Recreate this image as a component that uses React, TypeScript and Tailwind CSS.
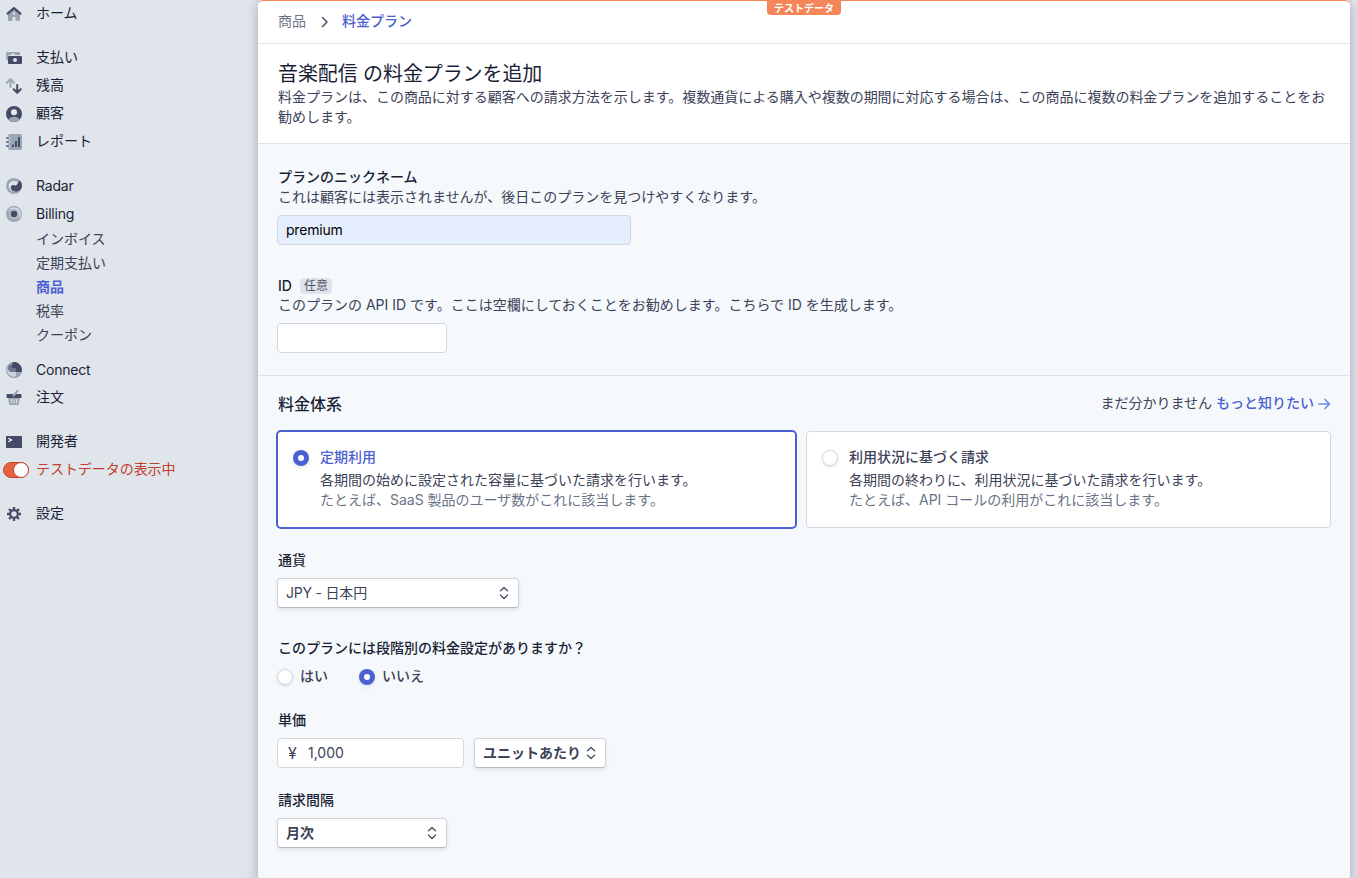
import React from 'react';

interface NavItemProps {
  label: string;
  icon: React.ReactNode;
  latin?: boolean;
}

const NavItem: React.FC<NavItemProps> = ({ label, icon, latin }) => (
  <a className="flex h-7 items-center pl-[6px] text-[#1a1f36]">
    <span className="mr-[14px] h-4 w-4 shrink-0">{icon}</span>
    <span className={latin ? 'tracking-[-0.2px]' : 'pb-[2px]'}>{label}</span>
  </a>
);

const Svg: React.FC<{ children: React.ReactNode }> = ({ children }) => (
  <svg width="16" height="16" viewBox="0 0 16 16" className="block">
    {children}
  </svg>
);

const DARK = '#454b66';
const LIGHT = '#9ba6b5';

const HomeIcon = () => (
  <Svg>
    <path d="M8 3l6 5v6a1 1 0 0 1-1 1H9.500v-4h-3v4H3a1 1 0 0 1-1-1V8z" fill={LIGHT} />
    <path d="M1.600 7.700L8 2.200l6.400 5.500" fill="none" stroke={DARK} strokeWidth="2.200" strokeLinecap="round" strokeLinejoin="round" />
    <circle cx="8" cy="7.500" r="1.200" fill="#e0e4eb" />
  </Svg>
);

const PaymentsIcon = () => (
  <Svg>
    <path d="M1 2h12a1 1 0 0 1 1 1v2H3.500A1.500 1.500 0 0 0 2 6.500V10H1a1 1 0 0 1-1-1V3a1 1 0 0 1 1-1z" fill={LIGHT} />
    <path d="M5 5.200a2 2 0 0 1 4 0z" fill="#e0e4eb" />
    <path fillRule="evenodd" d="M3 6h12a1 1 0 0 1 1 1v6a1 1 0 0 1-1 1H3a1 1 0 0 1-1-1V7a1 1 0 0 1 1-1zm6 2a2 2 0 1 0 0 4 2 2 0 0 0 0-4z" fill={DARK} />
  </Svg>
);

const BalanceIcon = () => (
  <Svg>
    <path d="M4.500 9V1.500M1 4.700L4.500 1.200 8 4.700" fill="none" stroke={LIGHT} strokeWidth="2" strokeLinecap="round" strokeLinejoin="round" />
    <path d="M11.200 7v7.500M7.700 11.300l3.500 3.500 3.500-3.500" fill="none" stroke={DARK} strokeWidth="2" strokeLinecap="round" strokeLinejoin="round" />
  </Svg>
);

const CustomersIcon = () => (
  <Svg>
    <circle cx="8" cy="8" r="8" fill={DARK} />
    <path d="M2.200 13.500C3.500 11.600 5.600 10.700 8 10.700s4.500.9 5.800 2.800A8 8 0 0 1 8 16a8 8 0 0 1-5.800-2.500z" fill={LIGHT} />
    <circle cx="8" cy="6.200" r="3" fill="#e9edf2" />
  </Svg>
);

const ReportsIcon = () => (
  <Svg>
    <rect x="2" width="14" height="16" rx="1.800" fill={LIGHT} />
    <path d="M1 4h1.500M1 8h1.500M1 12h1.500" stroke="#e0e4eb" strokeWidth="3" strokeLinecap="round" />
    <path d="M.8 4h1.600M.8 8h1.600M.8 12h1.600" stroke={DARK} strokeWidth="1.600" strokeLinecap="round" />
    <path d="M7 10.500V13M10 7v6M13 3v10" stroke={DARK} strokeWidth="2" />
  </Svg>
);

const RadarIcon = () => (
  <Svg>
    <circle cx="8" cy="8" r="8" fill={LIGHT} />
    <circle cx="8" cy="8" r="5.300" fill="#e0e4eb" />
    <path d="M13.600 2.300A8 8 0 0 1 16 8c-.2 3.200-3 5.500-6.300 5.500-3 0-5-1.900-4.900-4.200C4.900 7.800 6 7 7.200 7c1.300 0 2 .8 3 .3 1.300-.7 2-3.200 3.400-5z" fill={DARK} />
  </Svg>
);

const BillingIcon = () => (
  <Svg>
    <circle cx="8" cy="8" r="8" fill={LIGHT} />
    <path d="M1.600 6A6.800 6.800 0 0 1 14.800 8c0 2.700-1.500 4.500-3.200 5.300 1.400-1.400 2-3 1.900-5A6.200 6.200 0 0 0 7.500 2.700C4.800 2.700 2.800 4 1.600 6z" fill="#e0e4eb" />
    <circle cx="8" cy="8" r="5.200" fill="#b3bdc9" />
    <circle cx="8" cy="8" r="3.200" fill={DARK} />
  </Svg>
);

const ConnectIcon = () => (
  <Svg>
    <circle cx="8" cy="8" r="7.400" fill="#cbd3dc" stroke={LIGHT} strokeWidth="1.200" />
    <path d="M10 10h5.700A8 8 0 0 1 8 16l2-2.500z" fill={LIGHT} />
    <path d="M6 0.300A8 8 0 0 1 15.700 10H10V6H6z" fill={DARK} />
    <path d="M6 .3V6h4v4H6a4 4 0 0 1 0-8z" fill="#6b748a" />
    <path d="M6 0h.5v2.300A4 4 0 0 0 2.300 6 6 6 0 0 1 6 0z" fill={LIGHT} />
  </Svg>
);

const OrdersIcon = () => (
  <Svg>
    <path d="M2 7h12l-1.200 7.200a1 1 0 0 1-1 .8H4.200a1 1 0 0 1-1-.8z" fill={LIGHT} />
    <path d="M5.200 9.300l.4 3.700M8 9.300V13M10.800 9.300l-.4 3.700" stroke="#e0e4eb" strokeWidth="1" strokeLinecap="round" />
    <rect x="0.500" y="4" width="15" height="4" rx="1" fill={DARK} />
    <path d="M7.500 5.500l4-4.500" stroke={LIGHT} strokeWidth="2" strokeLinecap="round" />
  </Svg>
);

const DevelopersIcon = () => (
  <Svg>
    <rect y="2" width="16" height="12" rx="1" fill={DARK} />
    <path d="M2.300 4.300L5.500 6 2.300 7.700" fill="none" stroke="#fff" strokeWidth="1.200" />
  </Svg>
);

const SettingsIcon = () => (
  <Svg>
    <circle cx="8" cy="8" r="3.800" fill="none" stroke={DARK} strokeWidth="2.200" />
    <path
      d="M8 1v2.500M8 12.500V15M1 8h2.500M12.500 8H15M3.050 3.050l1.800 1.800M11.150 11.150l1.800 1.800M3.050 12.950l1.800-1.800M11.150 4.850l1.800-1.800"
      stroke={DARK}
      strokeWidth="2.300"
    />
  </Svg>
);

const UpDown = () => (
  <svg width="10" height="14" viewBox="0 0 10 14" className="block shrink-0">
    <path d="M1.500 4.800L5 1.500 8.500 4.800M1.500 9.200L5 12.500 8.500 9.200" fill="none" stroke="#4f566b" strokeWidth="1.500" strokeLinecap="round" strokeLinejoin="round" />
  </svg>
);

const Radio: React.FC<{ checked?: boolean }> = ({ checked }) =>
  checked ? (
    <span className="flex h-4 w-4 shrink-0 items-center justify-center rounded-full bg-[#4b61d1] shadow-[0_2px_4px_rgba(60,66,87,0.12)]">
      <span className="h-[6px] w-[6px] rounded-full bg-white" />
    </span>
  ) : (
    <span className="block h-4 w-4 shrink-0 rounded-full border border-[#d5d9dd] bg-white shadow-[0_1px_3px_rgba(60,66,87,0.15)]" />
  );

const SELECT =
  'flex h-[30px] items-center justify-between rounded-[4px] border border-[#cfd3da] border-b-[#b3b8c1] bg-white px-2 pr-[9px] text-[#3c4257] shadow-[0_2px_4px_rgba(60,66,87,0.12)]';

const subItems = ['インボイス', '定期支払い', '商品', '税率', 'クーポン'];

const Sidebar = () => (
  <nav className="w-[258px] shrink-0">
    <NavItem label="ホーム" icon={<HomeIcon />} />
    <div className="mt-4">
      <NavItem label="支払い" icon={<PaymentsIcon />} />
      <NavItem label="残高" icon={<BalanceIcon />} />
      <NavItem label="顧客" icon={<CustomersIcon />} />
      <NavItem label="レポート" icon={<ReportsIcon />} />
    </div>
    <div className="mt-4">
      <NavItem label="Radar" icon={<RadarIcon />} latin />
      <NavItem label="Billing" icon={<BillingIcon />} latin />
      <div className="-mt-px mb-[9px]">
        {subItems.map((label) => (
          <a
            key={label}
            className={
              label === '商品'
                ? 'flex h-6 items-center pl-9 font-bold text-[#4b61d1]'
                : 'flex h-6 items-center pl-9 text-[#3c4257]'
            }
          >
            {label}
          </a>
        ))}
      </div>
      <NavItem label="Connect" icon={<ConnectIcon />} latin />
      <NavItem label="注文" icon={<OrdersIcon />} />
    </div>
    <div className="mt-4">
      <NavItem label="開発者" icon={<DevelopersIcon />} />
      <div className="flex h-7 items-center pl-[3px] text-[#c0402a]">
        <span className="mr-[7px] flex h-4 w-[26px] justify-end rounded-full border border-[#c84727] bg-[#e56342]">
          <span className="-my-px -mr-px h-4 w-4 rounded-full border border-[#c84727] bg-white" />
        </span>
        <span className="pb-[2px] tracking-[-0.05px]">テストデータの表示中</span>
      </div>
    </div>
    <div className="mt-4">
      <NavItem label="設定" icon={<SettingsIcon />} />
    </div>
  </nav>
);

export default function App() {
  return (
    <div className="flex h-[878px] w-[1357px] overflow-hidden bg-[#e0e4eb] font-['Inter','Noto_Sans_CJK_JP',sans-serif] text-sm leading-5 text-[#3c4257]">
      <Sidebar />
      <main className="relative w-[1092px] rounded-t-[5px] bg-[#f5f9fc] shadow-[0_7px_14px_rgba(60,66,87,0.2),0_0_8px_rgba(60,66,87,0.2)]">
        <div className="absolute inset-x-0 top-0 flex h-4 justify-center overflow-hidden rounded-t-[5px] border-t border-[#f5865a]">
          <span className="flex h-[14px] w-[74px] items-center justify-center rounded-b-[4px] bg-[#f5865a] text-[10px] font-bold text-white">
            テストデータ
          </span>
        </div>

        <header className="flex h-11 items-center rounded-t-[5px] border-b border-[#dfe3e9] bg-white pl-5 text-[#697386]">
          <span className="pb-px">商品</span>
          <svg width="8" height="12" viewBox="0 0 8 12" className="mr-[13px] ml-[15px]">
            <path d="M1.500 1.500L6 6l-4.500 4.500" fill="none" stroke="#4f566b" strokeWidth="1.600" strokeLinecap="round" strokeLinejoin="round" />
          </svg>
          <a className="pb-px font-medium text-[#4b61d1]">料金プラン</a>
        </header>

        <section className="h-[100px] border-b border-[#dfe3e9] bg-white px-5 pt-4">
          <h1 className="text-xl leading-7 tracking-[-0.1px] text-[#1a1f36]">音楽配信 の料金プランを追加</h1>
          <p className="-mt-px tracking-[-0.013px]">
            料金プランは、この商品に対する顧客への請求方法を示します。複数通貨による購入や複数の期間に対応する場合は、この商品に複数の料金プランを追加することをお勧めします。
          </p>
        </section>

        <section className="h-[232px] border-b border-[#dfe3e9] px-5 pt-[23px]">
          <label className="block font-medium text-[#1a1f36]">プランのニックネーム</label>
          <p>これは顧客には表示されませんが、後日このプランを見つけやすくなります。</p>
          <div className="-ml-px mt-2 flex h-[30px] w-[354px] items-center rounded-[4px] border border-[#d3d8df] bg-[#e5eefd] px-2 tracking-[-0.2px] text-black">
            premium
          </div>
          <label className="mt-[31px] flex items-center font-medium text-[#1a1f36]">
            ID
            <span className="ml-2 flex h-4 items-center rounded-[4px] bg-[#e0e4ea] px-1 text-xs font-normal text-[#4f566b]">任意</span>
          </label>
          <p className="-mt-px">このプランの API ID です。ここは空欄にしておくことをお勧めします。こちらで ID を生成します。</p>
          <div className="-ml-px mt-2 h-[30px] w-[170px] rounded-[4px] border border-[#d3d8df] bg-white" />
        </section>

        <section className="px-5 pt-[18px]">
          <div className="flex h-5 items-center justify-between">
            <h2 className="text-base leading-5 font-medium text-[#1a1f36]">料金体系</h2>
            <div className="-mr-px flex items-center gap-1">
              <span className="pb-[2px]">まだ分かりません</span>
              <a className="flex items-center gap-1 font-medium text-[#4b61d1]">
                <span className="pb-[2px]">もっと知りたい</span>
                <svg width="13" height="12" viewBox="0 0 13 12">
                  <path d="M1 6h10.500M7 1.500L11.500 6 7 10.500" fill="none" stroke="#6c8eef" strokeWidth="1.700" strokeLinecap="round" strokeLinejoin="round" />
                </svg>
              </a>
            </div>
          </div>

          <div className="mt-4 -mr-px -ml-[2px] flex h-[99px] items-center gap-[9px]">
            <div className="flex h-[99px] w-[521px] shrink-0 gap-[11px] rounded-[5px] border-2 border-[#4b61d1] bg-white pt-[15px] pl-[15px]">
              <div className="pt-[3px]">
                <Radio checked />
              </div>
              <div>
                <div className="mb-[3px] font-medium text-[#4b61d1]">定期利用</div>
                <div>各期間の始めに設定された容量に基づいた請求を行います。</div>
                <div className="text-[#697386]">たとえば、SaaS 製品のユーザ数がこれに該当します。</div>
              </div>
            </div>
            <div className="flex h-[97px] w-[525px] shrink-0 gap-[11px] rounded-[4px] border border-[#d3d8df] bg-white pt-[15px] pl-[15px]">
              <div className="pt-[3px]">
                <Radio />
              </div>
              <div>
                <div className="mb-[3px] font-medium">利用状況に基づく請求</div>
                <div>各期間の終わりに、利用状況に基づいた請求を行います。</div>
                <div className="text-[#697386]">たとえば、API コールの利用がこれに該当します。</div>
              </div>
            </div>
          </div>

          <label className="mt-[21px] block font-medium text-[#1a1f36]">通貨</label>
          <div className="-ml-px mt-2 w-[242px] tracking-[-0.2px]">
            <div className={SELECT}>
              JPY - 日本円
              <UpDown />
            </div>
          </div>

          <label className="mt-[30px] block font-medium text-[#1a1f36]">このプランには段階別の料金設定がありますか？</label>
          <div className="-ml-px mt-[9px] flex h-5 items-center">
            <Radio />
            <span className="ml-[7px] w-[59px] pb-[2px] font-medium">はい</span>
            <Radio checked />
            <span className="ml-[7px] pb-[2px] font-medium">いいえ</span>
          </div>

          <label className="mt-[23px] block font-medium text-[#1a1f36]">単価</label>
          <div className="-ml-px mt-2 flex gap-[10px]">
            <div className="flex h-[30px] w-[187px] items-center rounded-[4px] border border-[#d3d8df] bg-white pl-[10px]">
              <span className="w-5 text-base leading-5">¥</span>
              1,000
            </div>
            <div className="w-[132px] font-bold">
              <div className={SELECT}>
                ユニットあたり
                <UpDown />
              </div>
            </div>
          </div>

          <label className="mt-[22px] block font-medium text-[#1a1f36]">請求間隔</label>
          <div className="-ml-px mt-2 w-[170px] font-bold">
            <div className={SELECT}>
              月次
              <UpDown />
            </div>
          </div>
        </section>
      </main>
    </div>
  );
}
